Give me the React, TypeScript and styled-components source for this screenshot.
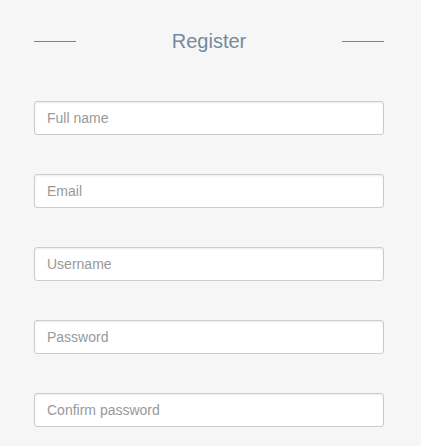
import React from "react";
import styled, { createGlobalStyle } from "styled-components";

const GlobalStyle = createGlobalStyle`
  html, body {
    margin: 0;
    padding: 0;
    background: #f6f6f6;
    font-family: "Liberation Sans", Arial, sans-serif;
  }
`;

const fields = [
  { name: "fullname", type: "text", placeholder: "Full name" },
  { name: "email", type: "email", placeholder: "Email" },
  { name: "username", type: "text", placeholder: "Username" },
  { name: "password", type: "password", placeholder: "Password" },
  { name: "confirm", type: "password", placeholder: "Confirm password" },
];

const App = () => {
  return (
    <>
      <GlobalStyle />
      <Page>
        <Header>
          <Rule />
          <Title>Register</Title>
          <Rule />
        </Header>
        <Form onSubmit={(e) => e.preventDefault()}>
          {fields.map((f) => (
            <Field key={f.name} name={f.name} type={f.type} placeholder={f.placeholder} />
          ))}
        </Form>
      </Page>
    </>
  );
};

const Page = styled.div`
  width: 350px;
  padding: 28px 0 0 34px;
`;

const Header = styled.div`
  display: flex;
  align-items: center;
  justify-content: space-between;
  height: 26px;
`;

const Rule = styled.span`
  display: block;
  width: 42px;
  height: 1px;
  background: #808080;
`;

const Title = styled.h2`
  margin: 0;
  font-size: 20px;
  font-weight: 400;
  line-height: 26px;
  color: #7489a0;
`;

const Form = styled.form`
  display: flex;
  flex-direction: column;
  gap: 39px;
  margin-top: 47px;
`;

const Field = styled.input`
  box-sizing: border-box;
  width: 350px;
  height: 34px;
  padding: 0 12px;
  border: 1px solid #cccccc;
  border-radius: 3px;
  background: #fff;
  box-shadow: inset 0 1px 2px rgba(0, 0, 0, 0.08);
  font-family: "Liberation Sans", Arial, sans-serif;
  font-size: 14px;
  color: #555;
  outline: none;

  &::placeholder {
    color: #999;
  }
`;

export default App;
